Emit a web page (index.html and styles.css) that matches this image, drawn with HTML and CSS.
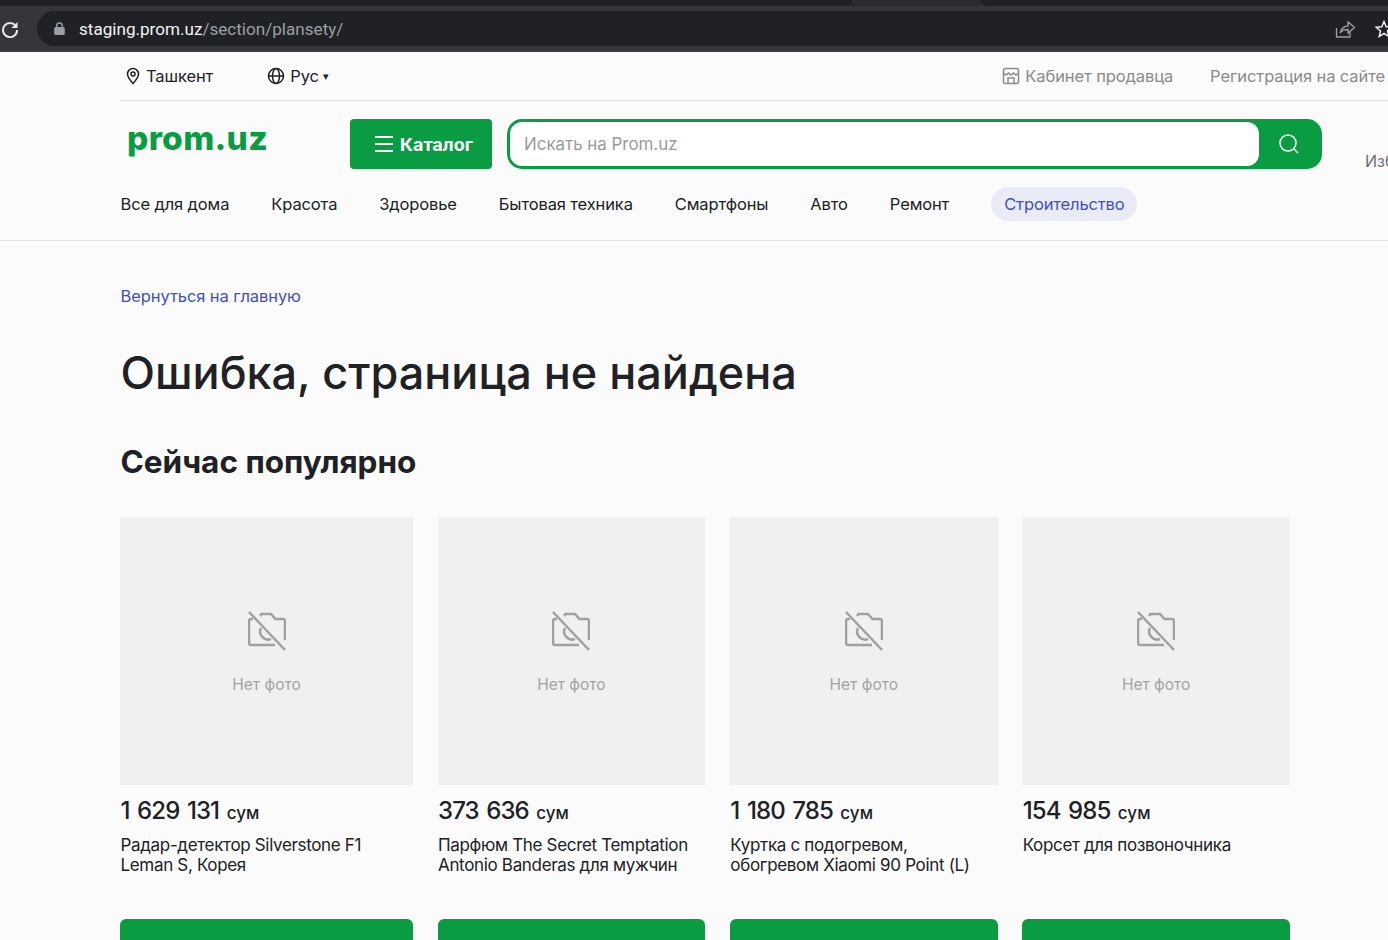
FILE: index.html
```html
<!DOCTYPE html>
<html lang="ru">

<head>
	<meta charset="UTF-8">
	<title>Ошибка, страница не найдена</title>
	<link rel="stylesheet" href="styles.css">
</head>

<body>
	<svg class="sprite" width="0" height="0">
		<symbol id="nophoto" viewBox="0 0 38 40">
			<path d="M5 8 H3 Q1 8 1 10 V32 Q1 34 3 34 H27" />
			<path d="M12 5 L13.500 3 H23 L27.500 8 H35 Q37 8 37 10 V29" />
			<path d="M13 17 A8 8 0 0 0 23 28" />
			<path d="M1 1 L37 39" />
		</symbol>
	</svg>

	<div class="chrome">
		<div class="tabs">
			<span class="tab tab-left"></span>
			<span class="tab tab-right"></span>
		</div>
		<div class="toolbar">
			<svg class="reload" viewBox="0 0 18 18" width="18" height="18">
				<path d="M15 6.500 A7 7 0 1 0 16 10" />
				<path class="solid" d="M16.500 2 V8 H10.500 Z" />
			</svg>
			<div class="omnibox">
				<svg class="lock" viewBox="0 0 12 14" width="11" height="13">
					<path d="M3 6 V4 a3 3 0 0 1 6 0 V6" />
					<rect x="1" y="6" width="10" height="7.500" rx="1" />
				</svg>
				<span class="url">staging.prom.uz<span class="url-path">/section/plansety/</span></span>
				<svg class="share" viewBox="0 0 20 18" width="20" height="18">
					<path d="M1.500 8 V17 H15 V12" />
					<path d="M5 13 C6 8 10 6 13 6 V2 L19.500 7.500 L13 13 V9.500 C10 9.500 7 10 5 13 Z" />
				</svg>
				<svg class="star" viewBox="0 0 18 18" width="18" height="18">
					<path d="M9 1.500 L11.200 6.700 L16.800 7.200 L12.500 10.900 L13.800 16.400 L9 13.500 L4.200 16.400 L5.500 10.900 L1.200 7.200 L6.800 6.700 Z" />
				</svg>
			</div>
		</div>
	</div>

	<header class="header">
		<div class="topbar">
			<a class="top-link city" href="#">
				<svg viewBox="0 0 16 18" width="16" height="18">
					<path d="M8 16.500 C5 13 2.500 10.500 2.500 7 a5.500 5.500 0 0 1 11 0 C13.500 10.500 11 13 8 16.500 Z" />
					<circle cx="8" cy="7" r="2" />
				</svg>
				Ташкент
			</a>
			<a class="top-link lang" href="#">
				<svg viewBox="0 0 18 18" width="18" height="18">
					<circle cx="9" cy="9" r="7.500" />
					<ellipse cx="9" cy="9" rx="3.500" ry="7.500" />
					<path d="M1.500 9 H16.500" />
				</svg>
				Рус <span class="caret">▾</span>
			</a>
			<a class="top-link muted seller" href="#">
				<svg viewBox="0 0 18 18" width="18" height="18">
					<rect x="1.500" y="1.500" width="15" height="15" rx="2" />
					<path d="M1.500 6 L4 8 L6.500 6 L9 8 L11.500 6 L14 8 L16.500 6" />
					<path d="M6 16 V11 H12 V16" />
				</svg>
				Кабинет продавца
			</a>
			<a class="top-link muted register" href="#">Регистрация на сайте</a>
		</div>

		<div class="mainbar">
			<a class="logo" href="#">prom.uz</a>
			<button class="catalog">
				<span class="burger"><i></i><i></i><i></i></span>
				Каталог
			</button>
			<form class="search">
				<input class="search-input" type="text" placeholder="Искать на Prom.uz">
				<span class="search-btn">
					<svg viewBox="0 0 22 22" width="22" height="22">
						<circle cx="10" cy="10" r="8" />
						<path d="M16 16 L20 20" />
					</svg>
				</span>
			</form>
			<span class="favs">Избранное</span>
		</div>

		<nav class="nav">
			<a href="#">Все для дома</a>
			<a href="#">Красота</a>
			<a href="#">Здоровье</a>
			<a href="#">Бытовая техника</a>
			<a href="#">Смартфоны</a>
			<a href="#">Авто</a>
			<a href="#">Ремонт</a>
			<a class="nav-active" href="#">Строительство</a>
		</nav>
	</header>

	<main class="content">
		<a class="back" href="#">Вернуться на главную</a>
		<h1>Ошибка, страница не найдена</h1>
		<h2>Сейчас популярно</h2>

		<div class="products">
			<div class="card">
				<div class="photo">
					<svg class="no-icon" width="38" height="40"><use href="#nophoto" /></svg>
					<span>Нет фото</span>
				</div>
				<div class="price">1 629 131 <small>сум</small></div>
				<div class="name">Радар-детектор Silverstone F1 Leman S, Корея</div>
				<div class="buy"></div>
			</div>
			<div class="card">
				<div class="photo">
					<svg class="no-icon" width="38" height="40"><use href="#nophoto" /></svg>
					<span>Нет фото</span>
				</div>
				<div class="price">373 636 <small>сум</small></div>
				<div class="name">Парфюм The Secret Temptation Antonio Banderas для мужчин</div>
				<div class="buy"></div>
			</div>
			<div class="card">
				<div class="photo">
					<svg class="no-icon" width="38" height="40"><use href="#nophoto" /></svg>
					<span>Нет фото</span>
				</div>
				<div class="price">1 180 785 <small>сум</small></div>
				<div class="name">Куртка с подогревом, обогревом Xiaomi 90 Point (L)</div>
				<div class="buy"></div>
			</div>
			<div class="card">
				<div class="photo">
					<svg class="no-icon" width="38" height="40"><use href="#nophoto" /></svg>
					<span>Нет фото</span>
				</div>
				<div class="price">154 985 <small>сум</small></div>
				<div class="name">Корсет для позвоночника</div>
				<div class="buy"></div>
			</div>
		</div>
	</main>
</body>

</html>
```

FILE: styles.css
```css
html,
body {
	margin: 0;
	padding: 0;
	height: 940px;
	overflow: hidden;
	background: #fbfbfb;
	color: #202124;
	font-family: "Inter", "Noto Sans", sans-serif;
}

a {
	color: inherit;
	text-decoration: none;
}

svg {
	display: block;
	flex: none;
	fill: none;
	stroke: currentColor;
	stroke-width: 1.5;
}

.sprite {
	position: absolute;
}

/* browser */
.chrome {
	height: 52px;
	background: #35363a;
	box-sizing: border-box;
	border-bottom: 1px solid #3f4043;
}

.tabs {
	height: 6px;
	background: #2a2b2e;
	display: flex;
}

.tab {
	display: block;
	height: 6px;
	background: #202124;
}

.tab-left {
	width: 853px;
	border-radius: 0 0 10px 0;
}

.tab-right {
	flex: 1;
	margin-left: 128px;
	border-radius: 0 0 0 10px;
}

.toolbar {
	display: flex;
	align-items: center;
	height: 45px;
}

.reload {
	color: #e8eaed;
	margin-left: 1px;
	stroke-width: 2;
}

.reload .solid {
	fill: #e8eaed;
	stroke: none;
}

.omnibox {
	flex: 1;
	height: 35px;
	margin-left: 18px;
	margin-right: -30px;
	padding-left: 17px;
	background: #202124;
	border-radius: 18px 0 0 18px;
	display: flex;
	align-items: center;
}

.lock {
	color: #9aa0a6;
	fill: #9aa0a6;
}

.lock path {
	fill: none;
}

.url {
	margin-left: 14px;
	font: 17.100px "Roboto", sans-serif;
	color: #f1f3f4;
}

.url-path {
	color: #9aa0a6;
}

.share {
	margin-left: auto;
	color: #9aa0a6;
	stroke-width: 1.3;
}

.star {
	margin-left: 20px;
	margin-right: 25px;
	color: #e8eaed;
}

/* header */
.header {
	border-bottom: 1px solid #e3e3e3;
	height: 188px;
}

.topbar {
	margin-left: 120px;
	height: 48px;
	border-bottom: 1px solid #e0e0e0;
	display: flex;
	align-items: center;
	white-space: nowrap;
	font-size: 16.500px;
	letter-spacing: -.1px;
}

.top-link {
	display: flex;
	align-items: center;
	gap: 5px;
}

.city {
	margin-left: 5px;
}

.lang {
	margin-left: 54px;
}

.caret {
	font-size: 11px;
	margin-left: -1px;
}

.muted {
	color: #8a8a8a;
}

.seller {
	margin-left: auto;
}

.register {
	margin-left: 37px;
	margin-right: 3px;
}

.mainbar {
	display: flex;
	align-items: flex-start;
	height: 68px;
	padding-top: 18px;
	padding-left: 127px;
	white-space: nowrap;
}

.logo {
	flex: none;
	width: 223px;
	margin-top: -1px;
	font: 800 33.500px/40px "Inter", sans-serif;
	color: #0a9c42;
	letter-spacing: .3px;
}

.catalog {
	flex: none;
	width: 142px;
	height: 50px;
	padding: 0 0 0 25px;
	border: 0;
	border-radius: 4px;
	background: #0a9c42;
	color: #fff;
	font: 700 18px "Inter", sans-serif;
	display: flex;
	align-items: center;
	gap: 7px;
}

.burger {
	display: flex;
	flex-direction: column;
	gap: 5px;
	width: 18px;
}

.burger i {
	display: block;
	height: 2px;
	background: #fff;
}

.search {
	flex: none;
	width: 815px;
	height: 50px;
	margin-left: 15px;
	box-sizing: border-box;
	border: 3px solid #0a9c42;
	border-radius: 15px;
	background: #0a9c42;
	display: flex;
}

.search-input {
	flex: 1;
	min-width: 0;
	border: 0;
	outline: 0;
	padding: 0 14px;
	border-radius: 12px;
	background: #fff;
	font: 16.900px "Inter", sans-serif;
}

.search-input::placeholder {
	color: #9a9a9a;
}

.search-btn {
	width: 60px;
	display: flex;
	align-items: center;
	justify-content: center;
	color: #fff;
}

.favs {
	flex: none;
	margin-left: 43px;
	margin-top: 32px;
	font-size: 16px;
	color: #6f6f6f;
}

.nav {
	display: flex;
	align-items: center;
	gap: 42px;
	height: 34px;
	padding-left: 120.500px;
	white-space: nowrap;
	font-size: 16.500px;
	letter-spacing: -.13px;
}

.nav-active {
	padding: 7px 12px 7px 13px;
	border-radius: 17px;
	background: #e9ecf6;
	color: #3f4fc0;
}

/* page */
.content {
	padding: 45px 98px 0 120.500px;
}

.back {
	display: block;
	height: 20px;
	line-height: 20px;
	color: #3f4fc0;
	font-size: 16.500px;
	letter-spacing: -.08px;
}

h1 {
	margin: 39px 0 0;
	font-size: 45px;
	line-height: 56px;
	font-weight: 500;
}

h2 {
	margin: 41px 0 0;
	font-size: 31.500px;
	line-height: 40px;
	font-weight: 700;
}

.products {
	display: grid;
	grid-template-columns: 292.500px repeat(3, 1fr);
	column-gap: 25px;
	margin-top: 35px;
}

.photo {
	height: 268px;
	margin-left: -.5px;
	background: #f0f0f0;
	color: #a3a3a3;
	font-size: 15.500px;
	display: flex;
	flex-direction: column;
	align-items: center;
	padding-top: 94px;
	box-sizing: border-box;
}

.no-icon {
	color: #a0a0a0;
	stroke-width: 2.500;
	margin-bottom: 24px;
}

.price {
	margin-top: 10px;
	font-size: 24px;
	line-height: 32px;
	font-weight: 500;
	letter-spacing: -.9px;
	word-spacing: 2px;
}

.price small {
	font-size: 17px;
	letter-spacing: 0;
}

.name {
	margin-top: 6px;
	height: 84px;
	font-size: 17px;
	line-height: 20px;
	letter-spacing: -.33px;
}

.buy {
	height: 60px;
	margin-left: -.5px;
	border-radius: 6px;
	background: #0a9c42;
}
```
